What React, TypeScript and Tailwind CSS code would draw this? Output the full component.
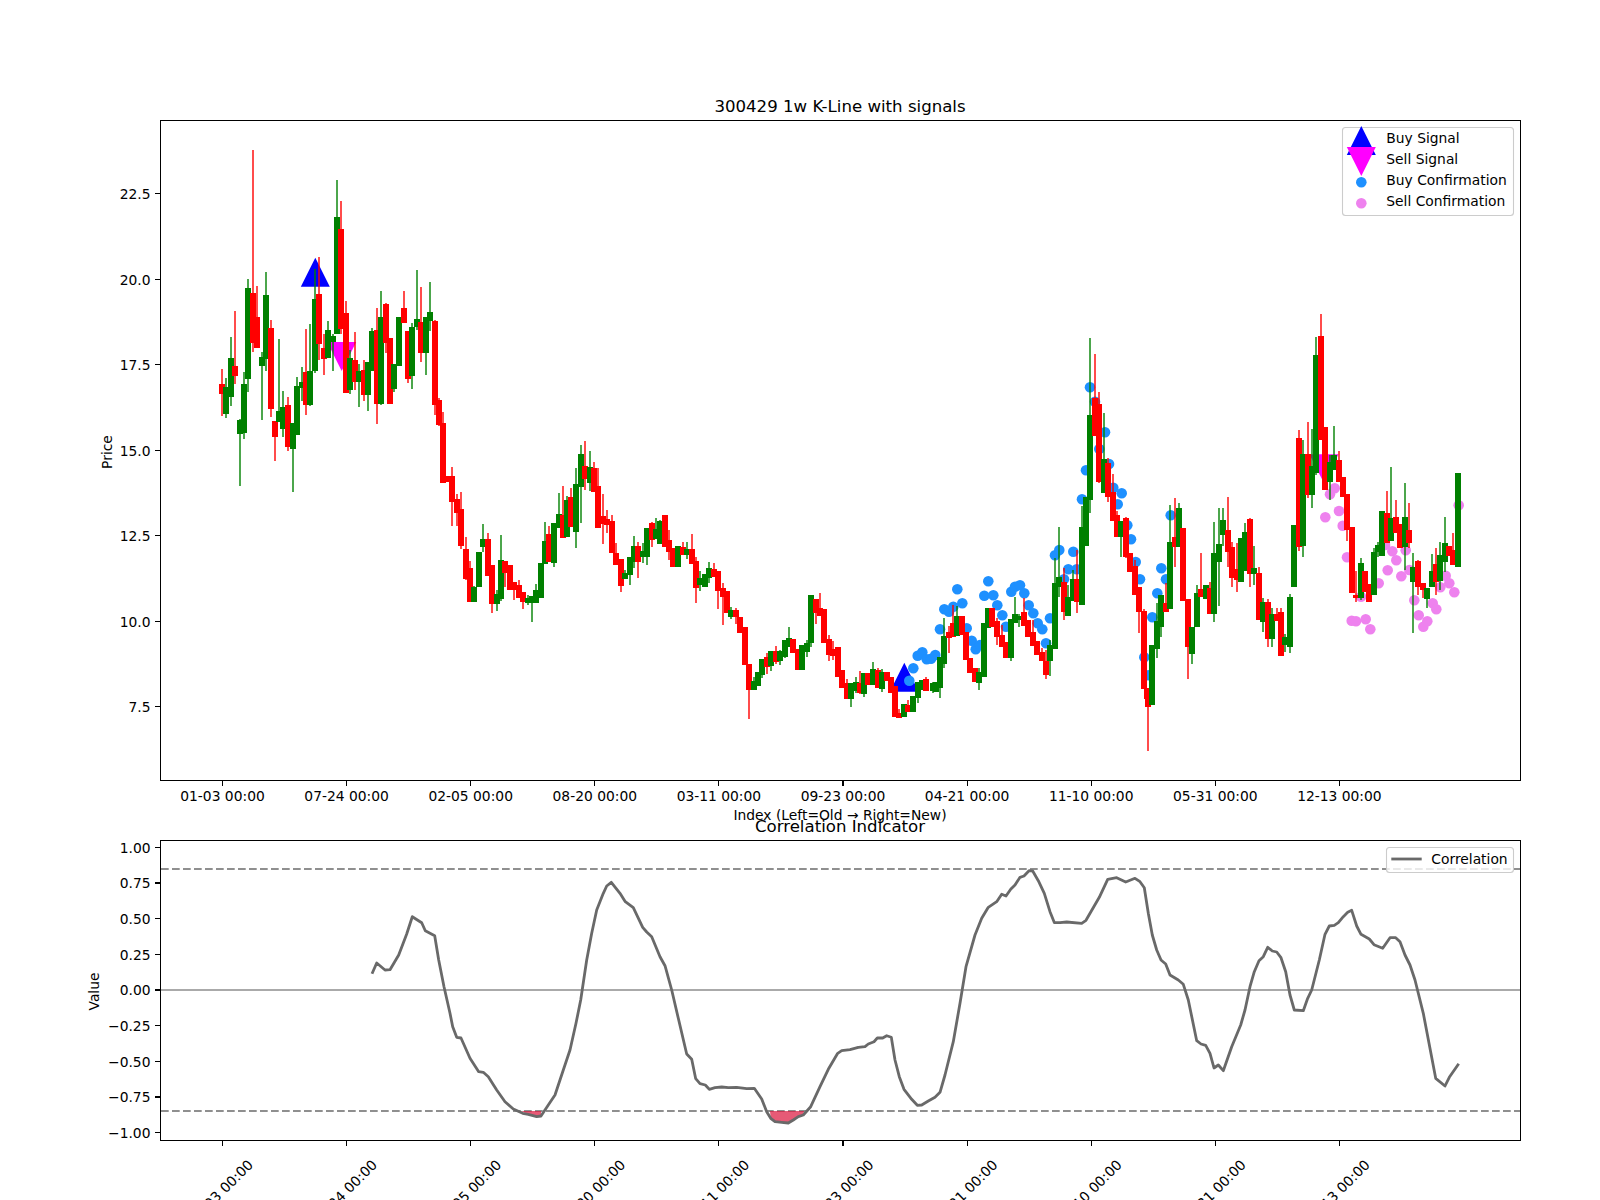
type Candle = [string, number, number, number, number, number];

// color, x, wick top, body top, body bottom, wick bottom (all in chart pixels)
const candles: Candle[] = [
  ['r',222,369,384,394,416],['g',226,378,387,414,418],['g',231,337,358,397,406],['r',235,311,366,376,384],
  ['g',240,419,420,434,486],['g',244,372,384,433,439],['g',248,279,288,379,392],['r',253,150,293,343,352],
  ['r',257,286,317,348,348],['g',262,352,357,366,420],['g',266,272,295,359,371],['r',271,320,328,409,417],
  ['r',275,421,421,437,461],['g',279,339,411,422,422],['g',283,391,407,429,437],['r',288,397,405,447,451],
  ['g',293,423,423,449,492],['g',297,377,386,435,435],['g',302,367,382,388,401],['r',306,329,372,405,415],
  ['g',310,324,371,405,406],['g',315,269,299,371,373],['r',319,257,294,344,360],['r',324,334,348,359,375],
  ['g',328,321,330,358,358],['g',333,334,336,342,371],['g',337,180,217,334,334],['r',341,201,229,329,334],
  ['r',346,301,313,393,393],['g',350,350,358,390,394],['r',355,332,360,382,390],['g',359,364,371,382,407],
  ['r',364,360,370,395,401],['g',368,362,362,395,411],['g',372,328,331,371,371],['r',377,308,330,404,424],
  ['g',381,291,317,404,405],['r',386,303,304,343,353],['r',390,338,338,404,404],['g',394,364,364,389,392],
  ['g',399,317,317,366,366],['r',404,291,308,323,323],['r',408,331,331,379,383],['g',412,323,327,376,389],
  ['g',417,270,319,327,330],['r',421,287,322,353,362],['g',426,317,317,353,375],['g',430,282,312,321,331],
  ['r',435,320,321,405,415],['r',439,398,400,425,426],['r',443,412,423,483,483],['r',447,476,476,482,482],
  ['r',452,467,476,502,526],['r',457,494,499,513,526],['r',461,492,509,546,549],['r',466,537,549,579,580],
  ['r',470,561,568,602,602],['g',474,586,587,602,602],['g',479,552,552,587,587],['g',483,524,539,547,552],
  ['r',488,533,539,576,576],['r',492,565,565,604,613],['g',497,590,594,604,611],['g',501,535,560,599,601],
  ['r',505,561,561,573,587],['r',510,565,565,590,590],['r',514,582,582,590,600],['r',519,580,585,598,598],
  ['r',523,592,592,602,609],['g',528,595,598,603,605],['g',532,596,596,603,622],['g',536,584,590,603,603],
  ['g',541,563,563,598,598],['g',545,522,541,564,564],['r',549,526,534,562,562],['g',554,523,523,563,567],
  ['g',559,493,514,528,528],['r',563,486,515,538,538],['g',567,496,500,537,537],['r',571,488,497,527,527],
  ['g',576,468,484,532,548],['g',581,445,454,487,523],['r',585,441,466,479,490],['g',590,451,467,483,491],
  ['r',594,462,468,492,492],['r',598,468,486,528,528],['r',603,494,516,524,544],['r',607,510,519,525,533],
  ['r',612,515,521,553,553],['r',616,543,553,565,565],['r',621,559,559,586,592],['g',625,570,573,579,579],
  ['g',630,557,557,575,585],['g',634,536,546,562,568],['r',638,542,546,562,578],['g',643,543,551,557,563],
  ['g',647,528,528,557,565],['r',652,522,523,540,547],['g',656,518,529,539,539],['g',660,520,521,544,544],
  ['r',665,515,515,547,547],['r',669,530,540,552,560],['r',673,548,548,567,567],['g',678,546,546,567,567],
  ['r',683,542,547,555,555],['g',687,542,549,555,559],['r',692,534,549,564,564],['r',696,557,561,588,603],
  ['g',700,571,578,585,591],['g',705,574,574,587,587],['g',709,562,568,578,583],['r',714,563,569,577,577],
  ['r',718,571,571,591,609],['r',723,583,588,597,625],['r',727,591,591,613,613],['g',731,607,610,617,619],
  ['r',736,608,610,617,624],['r',740,617,617,633,633],['r',745,627,627,665,665],['r',749,664,664,690,719],
  ['g',754,677,681,690,690],['g',758,672,672,686,686],['g',762,659,659,675,678],['r',767,653,657,667,674],
  ['g',771,651,651,666,671],['r',776,646,651,662,664],['g',780,650,651,661,665],['g',785,640,640,657,658],
  ['g',789,627,638,647,647],['r',793,639,639,653,653],['r',798,649,649,670,670],['g',802,645,645,670,670],
  ['g',807,640,643,652,657],['g',811,595,595,643,647],['r',816,599,599,613,624],['r',820,593,608,616,616],
  ['r',824,609,609,643,643],['r',829,635,639,655,661],['r',833,641,649,656,660],['r',838,647,647,677,677],
  ['r',842,670,670,688,688],['r',847,679,683,699,699],['g',851,683,683,699,707],['g',856,677,682,691,693],
  ['r',860,671,683,693,694],['g',864,673,673,694,697],['r',868,673,673,685,685],['g',873,662,669,685,685],
  ['r',878,668,670,688,688],['g',882,669,672,689,692],['r',887,672,672,681,681],['r',891,677,677,693,693],
  ['r',895,686,686,717,717],['r',899,709,713,718,718],['g',904,704,704,717,717],['r',908,700,705,712,712],
  ['g',913,696,696,712,712],['g',918,682,682,698,703],['g',922,680,680,690,690],['r',926,677,679,691,691],
  ['g',933,682,683,691,693],['g',936,682,682,692,692],['g',940,657,657,688,698],['g',944,618,636,664,668],
  ['r',949,626,632,638,653],['r',953,605,623,637,637],['g',957,606,616,636,636],['r',962,616,616,635,635],
  ['r',966,632,632,660,660],['r',970,658,658,673,673],['r',975,668,668,682,682],['g',979,668,672,683,690],
  ['g',984,623,623,677,677],['g',988,608,608,628,628],['r',992,608,608,627,627],['r',997,618,621,637,645],
  ['r',1002,625,635,647,647],['r',1006,642,642,658,658],['g',1011,619,619,658,661],['g',1015,597,614,623,623],
  ['g',1019,614,616,620,627],['r',1024,598,612,626,626],['r',1028,620,620,637,637],['r',1033,620,632,646,646],
  ['r',1037,641,641,655,655],['r',1042,648,652,661,661],['r',1046,650,661,675,679],['g',1050,640,645,661,676],
  ['g',1055,558,583,649,649],['g',1059,527,577,587,597],['r',1064,568,582,612,620],['g',1068,585,597,616,616],
  ['g',1073,570,579,601,601],['r',1077,550,579,602,613],['g',1082,506,527,605,605],['g',1086,497,497,546,546],
  ['g',1090,338,415,500,513],['r',1095,354,398,436,436],['r',1099,392,404,482,483],['g',1104,413,459,493,493],
  ['r',1108,458,463,497,502],['r',1113,474,492,521,521],['r',1117,511,515,537,537],['g',1121,521,521,537,557],
  ['r',1126,517,518,557,558],['r',1130,553,553,572,572],['r',1135,560,566,595,595],['r',1139,587,587,612,633],
  ['r',1144,609,611,689,689],['r',1147,688,688,699,699],['r',1148,688,688,707,751],['g',1152,645,645,705,705],
  ['g',1157,603,621,649,658],['g',1161,595,595,627,637],['r',1166,583,603,612,612],['g',1170,505,542,609,609],
  ['r',1175,498,537,547,567],['g',1179,503,508,547,547],['r',1183,528,528,601,601],['r',1188,599,599,647,679],
  ['g',1192,627,627,654,664],['g',1197,585,593,627,627],['r',1201,553,589,597,597],['g',1206,585,585,599,599],
  ['r',1210,582,588,614,614],['g',1214,522,553,614,622],['g',1219,508,544,562,606],['g',1223,508,520,535,546],
  ['r',1228,497,530,552,567],['r',1232,542,547,578,587],['r',1237,543,569,580,592],['g',1241,538,538,582,582],
  ['g',1245,523,532,571,571],['r',1250,518,519,574,587],['g',1254,546,568,574,585],['r',1259,567,573,620,620],
  ['g',1263,598,602,622,632],['r',1268,599,602,639,647],['g',1272,608,614,639,647],['r',1277,608,614,621,621],
  ['r',1281,608,612,656,656],['g',1285,634,637,645,652],['g',1290,594,597,647,653],['g',1294,525,525,587,587],
  ['r',1299,430,438,547,551],['g',1303,440,454,546,557],['r',1308,422,454,495,498],['g',1312,429,466,495,508],
  ['g',1316,337,355,473,475],['r',1321,314,336,440,440],['r',1325,427,427,490,490],['g',1330,455,462,482,500],
  ['g',1334,426,455,470,470],['r',1339,451,460,482,482],['r',1343,477,477,497,497],['r',1347,494,494,530,541],
  ['r',1352,527,527,593,593],['r',1356,571,595,598,602],['g',1361,558,563,598,600],['r',1365,571,571,592,592],
  ['r',1369,584,584,602,602],['g',1374,548,552,595,595],['g',1378,542,545,552,557],['g',1382,511,511,556,556],
  ['r',1387,491,513,543,543],['g',1391,467,518,541,541],['r',1396,500,517,533,533],['r',1400,524,524,548,548],
  ['g',1405,483,517,547,570],['r',1409,503,530,543,548],['g',1413,553,567,582,633],['r',1418,560,561,587,595],
  ['r',1423,583,583,590,598],['g',1427,588,588,599,608],['g',1432,554,571,587,587],['r',1436,548,564,582,595],
  ['g',1440,542,555,581,590],['g',1445,517,543,562,572],['r',1449,546,546,556,556],['r',1453,533,550,565,565],
  ['g',1458,473,473,567,567],
];

const buyDots = [
  [909.3,680.7],[913.3,668.3],[917.7,655.7],[922.3,652.3],[926.7,659.3],[931,658.7],[935.3,655],[940,629.3],
  [944.3,609.3],[949,611.7],[953.3,606.7],[957.3,589.3],[962.3,603.3],[966.7,628.3],[971.7,640.7],[975.7,649.3],
  [980,645],[984.3,595.7],[988.3,581.3],[993.3,595.3],[997.3,605.3],[1002.3,615.3],[1006,626.7],[1011.3,591.7],
  [1015,586.7],[1020,585.3],[1024.3,593.3],[1028.7,605.3],[1033.3,613.3],[1037.7,623.3],[1042.3,629.3],[1046,643.3],
  [1050,618.3],[1055,555.3],[1059.3,550],[1064,579.3],[1068.3,569.3],[1073.3,551.7],[1076.7,569.3],[1082,499.3],
  [1086,470.3],[1090,387.3],[1095,401.7],[1099.3,449],[1105,432.3],[1109,464],[1113.3,487.7],[1117.7,504.3],
  [1121.7,493.3],[1127.3,525.3],[1131,539.3],[1135.7,562],[1140,579.3],[1144.3,657.3],[1148.3,675.3],[1152.3,617.3],
  [1157.3,593.3],[1161.3,568.3],[1166,579.3],[1170.7,515.3],
];

const sellDots = [
  [1325.3,517.3],[1330,494.3],[1334.7,488.3],[1339,511],[1342.7,525.7],[1347,557.3],[1351.7,620.7],[1356,621.3],
  [1361,596.7],[1365.7,619.3],[1370.3,629.3],[1378.7,583.3],[1385,545],[1387.7,570.3],[1392.3,551.3],[1396.3,560.3],
  [1401.3,576.3],[1405.7,550.3],[1409.3,570],[1414.3,600.3],[1418.7,615.3],[1423.3,626.7],[1427.3,621.3],[1432.7,603.3],
  [1436.3,609.3],[1440.3,587.3],[1445.7,575.7],[1449.3,583.3],[1454.3,592.3],[1458.7,505.3],
];

const corr = `372,973.7 376.7,963 385,970 390,969.7 398.7,955 406.7,934 412.3,916.7 421.7,922.7 425.3,930.7 434.7,935.7
438.7,960 444,986.7 450,1013.3 452.7,1026.7 456.7,1037.3 461,1038 470,1058.3 478.7,1071.7 483.3,1072.3 488.3,1076.7
496.7,1090 505,1101.7 513.3,1109 522.7,1113.3 528.3,1114.3 536.7,1116.7 541,1116 548.3,1105 555,1095 563.3,1070
570,1050 576,1023.3 580.7,1000 586.7,960 591.7,933.3 596.7,910 603.3,893.3 606.7,886 611.3,882.3 620,893.3
625.3,901.7 633.3,907.7 642.7,927.3 646.7,932 651.7,936.7 660,956.7 665,965.7 671.7,990 678.3,1018.3 686.7,1054
691.7,1059.3 695.7,1078.7 700,1083.7 705.3,1085 709.3,1089.3 715,1087.7 721.7,1087 728.3,1087.7 736.7,1087.3 746.7,1088.7
754.3,1088.3 761.7,1099 766.7,1111.7 770.7,1118.3 775,1121.7 781.7,1122.3 788.3,1123 793.3,1120 798.3,1116.7 803.3,1115
810.7,1106.7 820,1086.7 828.3,1069.3 837.7,1053.3 841.7,1050.7 850,1049.7 858.3,1047.3 865,1046.7 868.3,1044 874,1041.7
877.3,1038 882.7,1038 886.7,1035.7 891.3,1037.3 895,1060 899.3,1076.7 904,1089.3 911.7,1099.3 917.3,1105.3 921.7,1105
928.3,1101 935,1097.3 940,1092.3 945,1075 953.3,1041.7 960,1003.3 966,966.7 975,935 981.7,918.3 988.3,907.3
996.7,901.7 1001.7,894.3 1006,896 1010.7,889.3 1015,885 1020,877.3 1024,876 1029,870.7 1032.7,871 1038.3,880.7
1044.3,893.3 1050,911.7 1054.3,922.5 1060,922.7 1066.7,922 1081.7,923.3 1086,920.3 1099.3,897.3 1107.7,879.3 1116.7,877.7
1125.7,882 1135,878.3 1140,881.7 1144.3,887.7 1148.3,913.3 1152.3,935 1156.7,950 1161,960 1165.7,964 1170,975
1178.3,980 1183.3,984.3 1188.3,1000 1196.7,1040.7 1201,1044 1205.7,1045.3 1210,1053.3 1214,1068 1218.3,1065 1223.3,1070.7
1231.7,1046.7 1240.7,1025 1245,1010 1250,986.7 1254.3,971.7 1259,960.7 1263.3,956.7 1267.7,947.3 1272.3,951 1276.7,952
1281,957.7 1285.7,971.7 1290,995 1294.3,1010 1303.3,1010.7 1307.7,998.3 1311.7,990 1319.3,960 1325,934.3 1329.3,926
1334.3,925.3 1338.3,922.7 1343.3,916.7 1347.7,912.3 1351.7,910.3 1356.7,926 1361,934.3 1369.3,939 1374,944.7 1382.7,948.3
1390,937.7 1395.7,937.7 1400,941.7 1405,955 1410,965 1415,980 1423.3,1013.3 1435.7,1078.3 1445,1086 1449.3,1077.3
1458.7,1063.7`;

const xTicks = [
  '01-03 00:00', '07-24 00:00', '02-05 00:00', '08-20 00:00', '03-11 00:00',
  '09-23 00:00', '04-21 00:00', '11-10 00:00', '05-31 00:00', '12-13 00:00',
];
const priceTicks = ['22.5', '20.0', '17.5', '15.0', '12.5', '10.0', '7.5'];
const corrTicks = ['1.00', '0.75', '0.50', '0.25', '0.00', '\u22120.25', '\u22120.50', '\u22120.75', '\u22121.00'];

const tickX = (i: number) => 222.5 + i * 124.1;

function Triangle({ x, y, up }: { x: number; y: number; up?: boolean }) {
  // y is the flat edge; the triangle is 29 wide and 29 tall
  const tip = up ? y - 29 : y + 29;
  return <polygon points={`${x - 14.5},${y} ${x + 14.5},${y} ${x},${tip}`} className={up ? 'fill-[#0000ff]' : 'fill-[#ff00ff]'} />;
}

function XAxisTicks({ y }: { y: number }) {
  return (
    <>
      {xTicks.map((_, i) => (
        <line key={i} x1={tickX(i)} x2={tickX(i)} y1={y} y2={y + 5} className="stroke-black stroke-[1.1px]" shapeRendering="crispEdges" />
      ))}
    </>
  );
}

function YTick({ y, label }: { y: number; label: string }) {
  return (
    <>
      <line x1={155} x2={160} y1={y} y2={y} className="stroke-black stroke-[1.1px]" shapeRendering="crispEdges" />
      <text x={150.5} y={y + 5.3} textAnchor="end">{label}</text>
    </>
  );
}

export default function App() {
  return (
    <div className="w-[1600px] h-[1200px] overflow-hidden bg-white">
      <svg
        width={1600}
        height={1200}
        viewBox="0 0 1600 1200"
        className="block fill-black text-[13.85px] font-['DejaVu_Sans',sans-serif]"
      >
        {/* K-line axes */}
        <text x={840} y={112} textAnchor="middle" className="text-[16.6px]">300429 1w K-Line with signals</text>

        <Triangle x={315.3} y={286.7} up />
        <Triangle x={341.7} y={342} />
        <Triangle x={904.3} y={691.7} up />
        <Triangle x={1324} y={454.3} />

        {buyDots.map(([x, y], i) => <circle key={i} cx={x} cy={y} r={5.3} className="fill-[#1e90ff]" />)}
        {sellDots.map(([x, y], i) => <circle key={i} cx={x} cy={y} r={5.3} className="fill-[#ee82ee]" />)}

        {candles.map(([c, x, wt, bt, bb, wb], i) => (
          <g key={i} className={c === 'r' ? 'fill-[#ff0000]' : 'fill-[#008000]'}>
            <rect x={x - 0.7} y={wt} width={1.4} height={wb - wt} />
            <rect x={x - 3} y={bt} width={6} height={bb - bt} />
          </g>
        ))}

        <rect x={160.5} y={120.5} width={1360} height={660} className="fill-none stroke-black stroke-[1.1px]" shapeRendering="crispEdges" />
        <XAxisTicks y={781} />
        {xTicks.map((t, i) => <text key={t} x={tickX(i)} y={801} textAnchor="middle">{t}</text>)}
        {priceTicks.map((t, i) => <YTick key={t} y={193.8 + i * 85.5} label={t} />)}
        <text x={840} y={820} textAnchor="middle">Index (Left=Old → Right=New)</text>
        <text transform="translate(111.5 452) rotate(-90)" textAnchor="middle">Price</text>

        {/* signal legend */}
        <rect x={1342.5} y={127.5} width={171} height={88} rx={3} className="fill-white/80 stroke-[#cccccc] stroke-[1.1px]" />
        <Triangle x={1361.3} y={155} up />
        <Triangle x={1361.3} y={147} />
        <circle cx={1361.3} cy={182.3} r={5.3} className="fill-[#1e90ff]" />
        <circle cx={1361.3} cy={203.3} r={5.3} className="fill-[#ee82ee]" />
        <text x={1386.3} y={143.3}>Buy Signal</text>
        <text x={1386.3} y={164.3}>Sell Signal</text>
        <text x={1386.3} y={185.3}>Buy Confirmation</text>
        <text x={1386.3} y={206.3}>Sell Confirmation</text>

        {/* correlation axes */}
        <text x={840} y={832} textAnchor="middle" className="text-[16.6px]">Correlation Indicator</text>

        <line x1={161} x2={1520} y1={990} y2={990} className="stroke-[#aaaaaa] stroke-2" />
        <line x1={161} x2={1520} y1={869} y2={869} strokeDasharray="7.7 3.3" className="stroke-[#8f8f8f] stroke-2" />
        <line x1={161} x2={1520} y1={1111} y2={1111} strokeDasharray="7.7 3.3" className="stroke-[#8f8f8f] stroke-2" />

        <polygon points="521,1111 528.3,1114.3 536.7,1116.7 541,1116 541,1111" className="fill-[#dc143c]/70" />
        <polygon points="770,1111 770.7,1118.3 775,1121.7 781.7,1122.3 788.3,1123 793.3,1120 798.3,1116.7 803.3,1115 804,1111" className="fill-[#dc143c]/70" />
        <polyline points={corr} className="fill-none stroke-[#696969] stroke-[2.8px]" strokeLinejoin="round" />

        <rect x={160.5} y={840.5} width={1360} height={300} className="fill-none stroke-black stroke-[1.1px]" shapeRendering="crispEdges" />
        <XAxisTicks y={1141} />
        {xTicks.map((t, i) => (
          <text key={t} x={tickX(i) - 2} y={1192} dy={5} textAnchor="middle" transform={`rotate(-45 ${tickX(i) - 2} 1192)`}>{t}</text>
        ))}
        {corrTicks.map((t, i) => <YTick key={t} y={847.3 + i * 35.67} label={t} />)}
        <text transform="translate(99 991.5) rotate(-90)" textAnchor="middle">Value</text>

        {/* correlation legend */}
        <rect x={1386.5} y={847.5} width={127} height={25} rx={3} className="fill-white/80 stroke-[#cccccc] stroke-[1.1px]" />
        <line x1={1391.3} x2={1421.7} y1={859} y2={859} className="stroke-[#696969] stroke-[2.8px]" />
        <text x={1431.3} y={863.5}>Correlation</text>
      </svg>
    </div>
  );
}
